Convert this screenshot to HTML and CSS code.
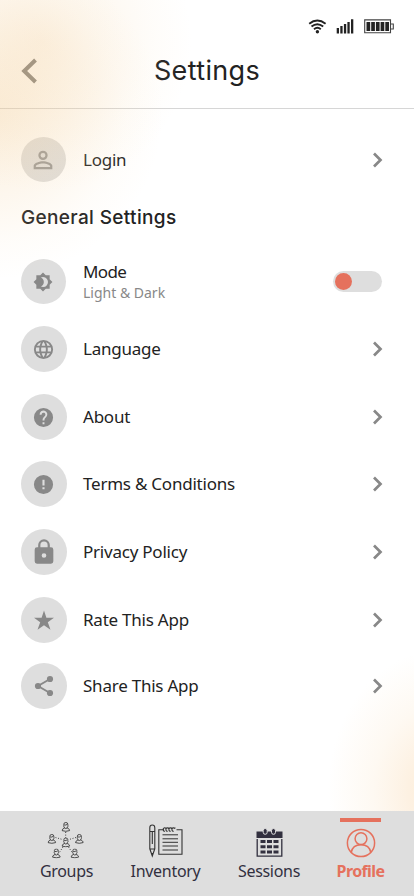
FILE: index.html
```html
<!DOCTYPE html>
<html lang="en">
<head>
<meta charset="utf-8">
<title>Settings</title>
<link rel="stylesheet" href="styles.css">
</head>
<body>
<svg width="0" height="0" class="defs">
  <symbol id="next" viewBox="0 0 12 16"><path d="M2 1.500 8.500 8 2 14.500" fill="none" stroke="#888" stroke-width="2.700"/></symbol>
  <symbol id="person" viewBox="0 0 9 10"><path d="M2.800 5.200C2 4.300 2.100 3.800 2.400 3.200V2q0-1.500 1.900-1.500T6.300 2v1.200c.400.700.200 1.300-.500 2v.900C7.400 6.600 8 7.300 8.100 8.600Q4.300 10 .500 8.600.500 7 2.800 6.100zM2.800 5.900q1.500 1.300 3 0M2.800 3q1.700.400 2.900-.700" fill="none" stroke="#333" stroke-width=".850"/></symbol>
</svg>
<div class="screen">
  <div class="status">
    <svg width="19" height="15" viewBox="0 0 19 15"><g fill="none" stroke="#222" stroke-width="1.900"><path d="M1.200 4.700Q9.300-1.800 17.600 4.700"/><path d="M3.500 7.600q5.800-4.800 11.700 0"/><path d="M6 10.200q3.400-2.900 6.800 0"/></g><circle cx="9.400" cy="12.800" r="1.700" fill="#222"/></svg>
    <svg class="signal" width="18" height="15" viewBox="0 0 18 15"><path d="M.700 9H3v5.500H.700zM4.300 7h2.300v7.500H4.300zM7.900 5h2.300v9.500H7.900zM11.400 3h2.300v11.500h-2.300zM15 .300h2.300v14.200H15z" fill="#222"/></svg>
    <svg class="battery" width="31" height="15" viewBox="0 0 31 15"><path d="M.700.900h25.800v12.900H.700zM27 5h2.300v5H27" fill="#fff" stroke="#444" stroke-width="1.100"/><path d="M2.500 3h3.700v9H2.500zM7.200 3h3.700v9H7.200zM11.900 3h3.700v9h-3.700zM16.600 3h3.700v9h-3.700zM21.300 3H25v9h-3.700z" fill="#222"/></svg>
  </div>
  <header class="header">
    <svg class="back" width="18" height="26" viewBox="0 0 18 26"><path d="M14.500 2 3.200 13l11.300 11" fill="none" stroke="#777" stroke-width="4"/></svg>
    <h1>Settings</h1>
  </header>
  <main>
    <div class="row login"><span class="disc"><svg viewBox="0 0 24 24" width="28" height="28"><path d="M12 5.900a2.100 2.100 0 1 1 0 4.200 2.100 2.100 0 0 1 0-4.200m0 9c2.970 0 6.100 1.460 6.100 2.100v1.100H5.900V17c0-.640 3.130-2.100 6.100-2.100M12 4a4 4 0 1 0 0 8 4 4 0 0 0 0-8m0 9c-2.670 0-8 1.340-8 4v3h16v-3c0-2.660-5.330-4-8-4"/></svg></span><span class="label">Login</span><svg class="next" width="12" height="16"><use href="#next"/></svg></div>
    <h2>General Settings</h2>
    <div class="row mode"><span class="disc"><svg viewBox="0 0 24 24" width="20" height="20"><path fill-rule="evenodd" d="M20 8.690V4h-4.690L12 .690 8.690 4H4v4.690L.690 12 4 15.310V20h4.690L12 23.310 15.310 20H20v-4.690L23.310 12zM12 18c-.890 0-1.740-.200-2.500-.550C11.560 16.500 13 14.420 13 12S11.560 7.500 9.500 6.550A6 6 0 1 1 12 18"/></svg></span><span class="label"><span class="name">Mode</span><small>Light &amp; Dark</small></span><span class="toggle"><i></i></span></div>
    <div class="row language"><span class="disc"><svg viewBox="0 0 24 24" width="23" height="23"><path d="M12 2a10 10 0 1 0 0 20 10 10 0 0 0 0-20m6.930 6h-2.950a15.700 15.700 0 0 0-1.380-3.560A8 8 0 0 1 18.930 8M12 4.040A14 14 0 0 1 13.910 8h-3.820A14 14 0 0 1 12 4.040M4.260 14a8 8 0 0 1 0-4h3.380a16.500 16.500 0 0 0 0 4zm.810 2h2.950c.320 1.250.780 2.450 1.380 3.560A8 8 0 0 1 5.070 16m2.950-8H5.070A8 8 0 0 1 9.400 4.440 15.700 15.700 0 0 0 8.020 8M12 19.960A14 14 0 0 1 10.090 16h3.820A14 14 0 0 1 12 19.960M14.340 14H9.660a14.700 14.700 0 0 1 0-4h4.680a14.300 14.300 0 0 1 0 4m.250 5.560c.600-1.110 1.060-2.310 1.380-3.560h2.950a8 8 0 0 1-4.330 3.560M16.360 14a16.500 16.500 0 0 0 0-4h3.380a8 8 0 0 1 0 4z"/></svg></span><span class="label">Language</span><svg class="next" width="12" height="16"><use href="#next"/></svg></div>
    <div class="row about"><span class="disc"><svg viewBox="0 0 24 24" width="23" height="23"><path d="M12 2a10 10 0 1 0 0 20 10 10 0 0 0 0-20m1 17h-2v-2h2zm2.070-7.750-.900.920C13.450 12.900 13 13.500 13 15h-2v-.500c0-1.100.450-2.100 1.170-2.830l1.240-1.260A2 2 0 1 0 10 9H8a4 4 0 1 1 7.070 2.250"/></svg></span><span class="label">About</span><svg class="next" width="12" height="16"><use href="#next"/></svg></div>
    <div class="row terms"><span class="disc"><svg viewBox="0 0 24 24" width="23" height="23"><path d="M12 2a10 10 0 1 0 0 20 10 10 0 0 0 0-20m1.100 15h-2.200v-2.200h2.200zm0-4h-2.200V7h2.200z"/></svg></span><span class="label">Terms &amp; Conditions</span><svg class="next" width="12" height="16"><use href="#next"/></svg></div>
    <div class="row privacy"><span class="disc"><svg viewBox="0 0 24 24" width="28" height="28"><path d="M18 8h-1V6A5 5 0 0 0 7 6v2H6a2 2 0 0 0-2 2v10a2 2 0 0 0 2 2h12a2 2 0 0 0 2-2V10a2 2 0 0 0-2-2m-6 9a2 2 0 1 1 0-4 2 2 0 0 1 0 4m3.100-9H8.900V6a3.100 3.100 0 0 1 6.200 0z"/></svg></span><span class="label">Privacy Policy</span><svg class="next" width="12" height="16"><use href="#next"/></svg></div>
    <div class="row rate"><span class="disc"><svg viewBox="0 0 20 20" width="20" height="20"><path d="m10 .500 2.400 7.300H20l-6.200 4.500 2.700 7.500L10 15.300l-6.500 4.500 2.700-7.500L0 7.800h7.600z"/></svg></span><span class="label">Rate This App</span><svg class="next" width="12" height="16"><use href="#next"/></svg></div>
    <div class="row share"><span class="disc"><svg viewBox="0 0 20 22" width="20" height="22"><path d="M16 4 4 11l12 7" fill="none" stroke="#888" stroke-width="1.900"/><circle cx="16" cy="4" r="3.100"/><circle cx="4" cy="11" r="3.100"/><circle cx="16" cy="18" r="3.100"/></svg></span><span class="label">Share This App</span><svg class="next" width="12" height="16"><use href="#next"/></svg></div>
  </main>
  <nav>
    <a class="groups"><svg width="38" height="38" viewBox="0 0 38 38"><use href="#person" x="14.500" y="0" width="9" height="10"/><use href="#person" x=".500" y="12" width="9" height="10"/><use href="#person" x="28" y="12" width="9" height="10"/><use href="#person" x="14.500" y="15.500" width="9" height="10"/><use href="#person" x="5" y="26.500" width="9" height="10"/><use href="#person" x="23.500" y="26.500" width="9" height="10"/><path d="M18.700 10v6M8.500 15.500l7 2M29 15.500l-7 2M16 25l-4 6M21.500 25l4 6" stroke="#333" stroke-width=".900" stroke-dasharray="1 1.600" fill="none"/></svg><span>Groups</span></a>
    <a class="inventory"><svg width="34" height="34" viewBox="0 0 34 34"><g fill="none" stroke="#333" stroke-width="1.100"><path d="M.800 7.500V3.800Q.800 1 3.300 1T5.800 3.800v21L3.300 32 .800 24.800zm0 0h5M.800 25h5M3.300 8v12M2.500 29.500h1.600M15 5.800H9.800v24.500H33V5.800h-5.500M13 30.300h17"/><path d="M13.500 10.800h15.500M13.500 14.800h15.500M13.500 18.300h15.500M13.500 22h15.500M13.500 26h15.500" stroke-width="1"/><path d="M16 7.200a1.500 1.700 0 1 1 1-2.500m1.700 2.500a1.500 1.700 0 1 1 1-2.500m2 2.500a1.500 1.700 0 1 1 1-2.500m2 2.500a1.500 1.700 0 1 1 1-2.500M17 4h9.500"/></g></svg><span>Inventory</span></a>
    <a class="sessions"><svg width="27" height="30" viewBox="0 0 27 30"><path d="M.500 3.500h26V10H.500z" fill="#32303f"/><path d="M1.200 11v17.200h24.600V11" fill="none" stroke="#32303f" stroke-width="1.300"/><path d="M4.500 12h5v3h-5zM11 12h5v3h-5zM17.500 12h5v3h-5zM4.500 17.200h5v3h-5zM11 17.200h5v3h-5zM17.500 17.200h5v3h-5zM4.500 22.400h5v3h-5zM11 22.400h5v3h-5zM17.500 22.400h5v3h-5z" fill="#32303f"/><g fill="#32303f" stroke="#dedede"><rect x="7.200" y=".500" width="4" height="5.800" rx="2"/><rect x="15.500" y=".500" width="4" height="5.800" rx="2"/></g></svg><span>Sessions</span></a>
    <a class="profile"><svg width="30" height="30" viewBox="0 0 30 30" fill="none" stroke="#e5715d" stroke-width="1.500"><circle cx="15" cy="15" r="13.600"/><circle cx="15" cy="10.700" r="5.900"/><path d="M5.200 24.300C6.200 19 9.500 16.700 15 16.700S23.800 19 24.800 24.300"/></svg><span>Profile</span></a>
  </nav>
</div>
</body>
</html>
```
FILE: styles.css
```css
* { box-sizing: border-box; }
body { margin: 0; }
.defs { position: absolute; }
.screen {
  position: relative;
  display: flex;
  flex-direction: column;
  width: 414px;
  height: 896px;
  overflow: hidden;
  background: radial-gradient(ellipse 112px 140px at 440px 790px, #fcecd8 0%, #fdf1e2 28%, #fef9f2 60%, #fff 100%);
  color: #222;
  font-family: "Noto Sans", sans-serif;
}
/* Warm glow that tints everything in the top corner */
.screen::after {
  content: "";
  position: absolute;
  inset: 0;
  pointer-events: none;
  background:
    radial-gradient(circle 150px at 42px 42px, rgba(242, 202, 145, .24), rgba(244, 208, 155, .15) 42%, rgba(246, 214, 165, .06) 75%, rgba(252, 236, 212, 0)),
    radial-gradient(ellipse 175px 165px at -12px 115px, rgba(242, 202, 145, .34), rgba(244, 208, 155, .2) 42%, rgba(246, 214, 165, .06) 78%, rgba(252, 236, 212, 0));
}
.status { display: flex; height: 34px; padding: 19px 20px 0 308px; }
.status svg { flex: none; }
.signal { margin-left: 9px; }
.battery { margin-left: 10px; }
.header { position: relative; display: flex; justify-content: center; height: 75px; border-bottom: 1px solid #d6d6d6; }
.back { position: absolute; left: 21px; top: 24px; }
h1 { margin: 17px 0 0; font: 400 27px/40px Inter, sans-serif; letter-spacing: .35px; }
main { height: 702px; padding: 28px 31px 0 21px; }
.row { display: flex; align-items: center; height: 46px; }
.login, .mode { height: 45px; }
.disc { display: flex; align-items: center; justify-content: center; width: 46px; height: 46px; margin-right: 16px; padding-right: 1px; border-radius: 50%; background: #dedede; fill: #888; }
.login .disc, .mode .disc { width: 45px; height: 45px; margin-right: 17px; }
.login .disc { fill: #959595; }
.label { flex: 1; font-size: 17px; line-height: 24px; letter-spacing: -.23px; white-space: nowrap; }
.name { letter-spacing: -.6px; }
.next { margin-right: -1px; }
small { display: block; margin-top: -1px; color: #888; font-size: 14px; line-height: 20px; letter-spacing: 0; }
h2 { height: 30px; margin: 21px 0 26px; font: 500 19px/30px Inter, sans-serif; letter-spacing: .35px; }
.language { margin-top: 22px; }
.about { margin-top: 22px; }
.terms { margin-top: 21px; }
.privacy, .rate { margin-top: 22px; }
.share { margin-top: 20px; }
.toggle { width: 49px; height: 21px; margin-right: 1px; padding: 2px; border-radius: 11px; background: #dedede; }
.toggle i { display: block; width: 17px; height: 17px; border-radius: 50%; background: #e5715d; }
nav { display: grid; grid-template-columns: 133px 65px 142px 41px; height: 85px; background: #dedede; color: #32303f; font-size: 16px; line-height: 22px; letter-spacing: -.3px; }
nav a { display: flex; flex-direction: column; align-items: center; padding-top: 11px; }
nav svg { position: relative; height: 38px; }
.groups svg { margin-left: -2px; }
.sessions svg, .profile svg { top: 2px; }
.profile { color: #e5715d; font-weight: 700; letter-spacing: -.6px; background: linear-gradient(#e5715d, #e5715d) 0 7px / 41px 4px no-repeat; }
```
